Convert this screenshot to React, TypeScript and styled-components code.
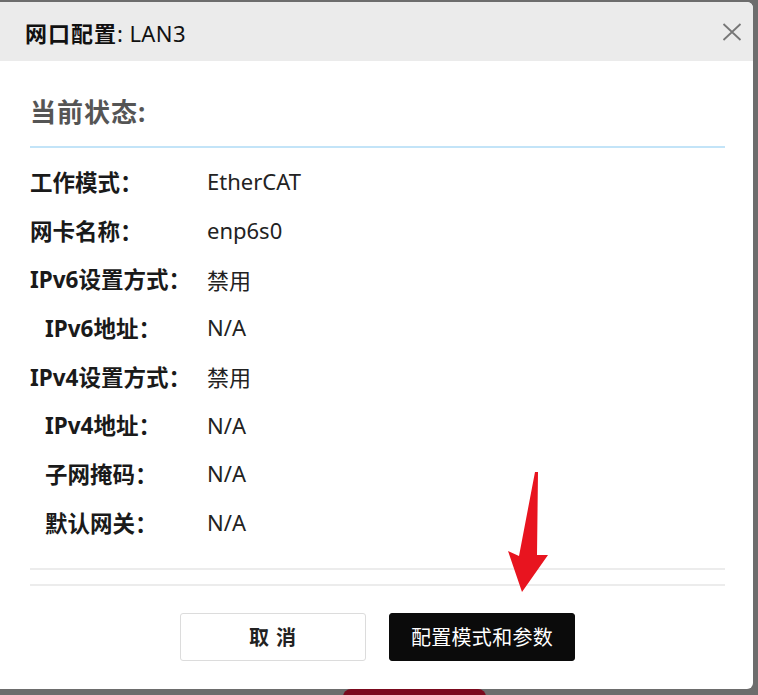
import React from 'react'
import styled, { createGlobalStyle } from 'styled-components'

const GlobalStyle = createGlobalStyle`
  html, body {
    margin: 0;
    padding: 0;
    background: #6d6d6d;
    font-family: "Noto Sans", "Noto Sans CJK SC", sans-serif;
  }
`

const Page = styled.div`
  height: 695px;
  overflow: hidden;
  padding-top: 2px;
  box-sizing: border-box;
`

const Dialog = styled.div`
  background: #fff;
  border-radius: 0 6px 6px 0;
  box-sizing: border-box;
  display: flex;
  flex-direction: column;
  height: 687px;
  overflow: hidden;
  position: relative;
  width: 753px;
`

const Header = styled.div`
  align-items: center;
  background: #ebebeb;
  display: flex;
  flex-shrink: 0;
  height: 59px;
  justify-content: space-between;
  padding: 0 11px 0 25px;
`

const Title = styled.div`
  color: #111;
  font-size: 22px;
  letter-spacing: 0.4px;

  b {
    font-weight: 700;
    letter-spacing: 1px;
  }
`

const CloseButton = styled.button`
  background: none;
  border: 0;
  cursor: pointer;
  display: flex;
  padding: 0;
`

const Body = styled.div`
  padding: 0 28px 0 30px;
`

const Heading = styled.div`
  border-bottom: 2px solid #c3e4f8;
  color: #555;
  font-size: 26px;
  font-weight: 700;
  letter-spacing: 1px;
  line-height: 32px;
  padding: 35px 0 18px;
`

const InfoList = styled.div`
  border-bottom: 2px solid #ececec;
  padding: 9px 0 21px;
`

const Row = styled.div`
  align-items: center;
  display: grid;
  grid-template-columns: 177px 1fr;
  height: 48.7px;
`

const Label = styled.div<{ $indent?: boolean }>`
  color: #1a1a1a;
  font-size: 22.5px;
  font-weight: 700;
  padding-left: ${({ $indent }) => ($indent ? '15px' : '0')};
`

const Value = styled.div`
  color: #222;
  font-size: 22px;
`

const Footer = styled.div`
  border-top: 2px solid #ececec;
  display: flex;
  gap: 23px;
  justify-content: center;
  margin: 14px 28px 0 30px;
  padding-top: 27px;
`

const Button = styled.button<{ $primary?: boolean }>`
  background: ${({ $primary }) => ($primary ? '#0b0b0b' : '#fff')};
  border: 1px solid ${({ $primary }) => ($primary ? '#0b0b0b' : '#dcdcdc')};
  border-radius: 3px;
  color: ${({ $primary }) => ($primary ? '#fff' : '#222')};
  cursor: pointer;
  font-family: "Noto Sans", "Noto Sans CJK SC", sans-serif;
  font-size: 20px;
  font-weight: ${({ $primary }) => ($primary ? 400 : 700)};
  height: 48px;
  letter-spacing: ${({ $primary }) => ($primary ? '0.3px' : '1px')};
  width: 186px;
`

const Arrow = styled.svg`
  left: 500px;
  position: absolute;
  top: 463px;
`

const Backdrop = styled.div`
  background: #7b0a1e;
  border-radius: 12px 12px 0 0;
  height: 8px;
  margin: 0 0 0 343px;
  width: 143px;
`

const rows = [
  { label: '工作模式：', value: 'EtherCAT' },
  { label: '网卡名称：', value: 'enp6s0' },
  { label: 'IPv6设置方式：', value: '禁用' },
  { label: 'IPv6地址：', value: 'N/A', indent: true },
  { label: 'IPv4设置方式：', value: '禁用' },
  { label: 'IPv4地址：', value: 'N/A', indent: true },
  { label: '子网掩码：', value: 'N/A', indent: true },
  { label: '默认网关：', value: 'N/A', indent: true },
]

export default function App() {
  return (
    <Page>
      <GlobalStyle />
      <Dialog>
        <Header>
          <Title>
            <b>网口配置</b>: LAN3
          </Title>
          <CloseButton aria-label="关闭">
            <svg width="20" height="20" viewBox="0 0 20 20">
              <path d="M1.5 2 L18.5 18 M18.5 2 L1.5 18" stroke="#777" strokeWidth="1.8" fill="none" />
            </svg>
          </CloseButton>
        </Header>
        <Body>
          <Heading>当前状态:</Heading>
          <InfoList>
            {rows.map((r) => (
              <Row key={r.label}>
                <Label $indent={r.indent}>{r.label}</Label>
                <Value>{r.value}</Value>
              </Row>
            ))}
          </InfoList>
        </Body>
        <Footer>
          <Button>取 消</Button>
          <Button $primary>配置模式和参数</Button>
        </Footer>
        <Arrow width="60" height="132" viewBox="0 0 60 132">
          <polygon points="35,7 38,7 37,90 48,90 22,127 8,86 19,91" fill="#e8141f" />
        </Arrow>
      </Dialog>
      <Backdrop />
    </Page>
  )
}
